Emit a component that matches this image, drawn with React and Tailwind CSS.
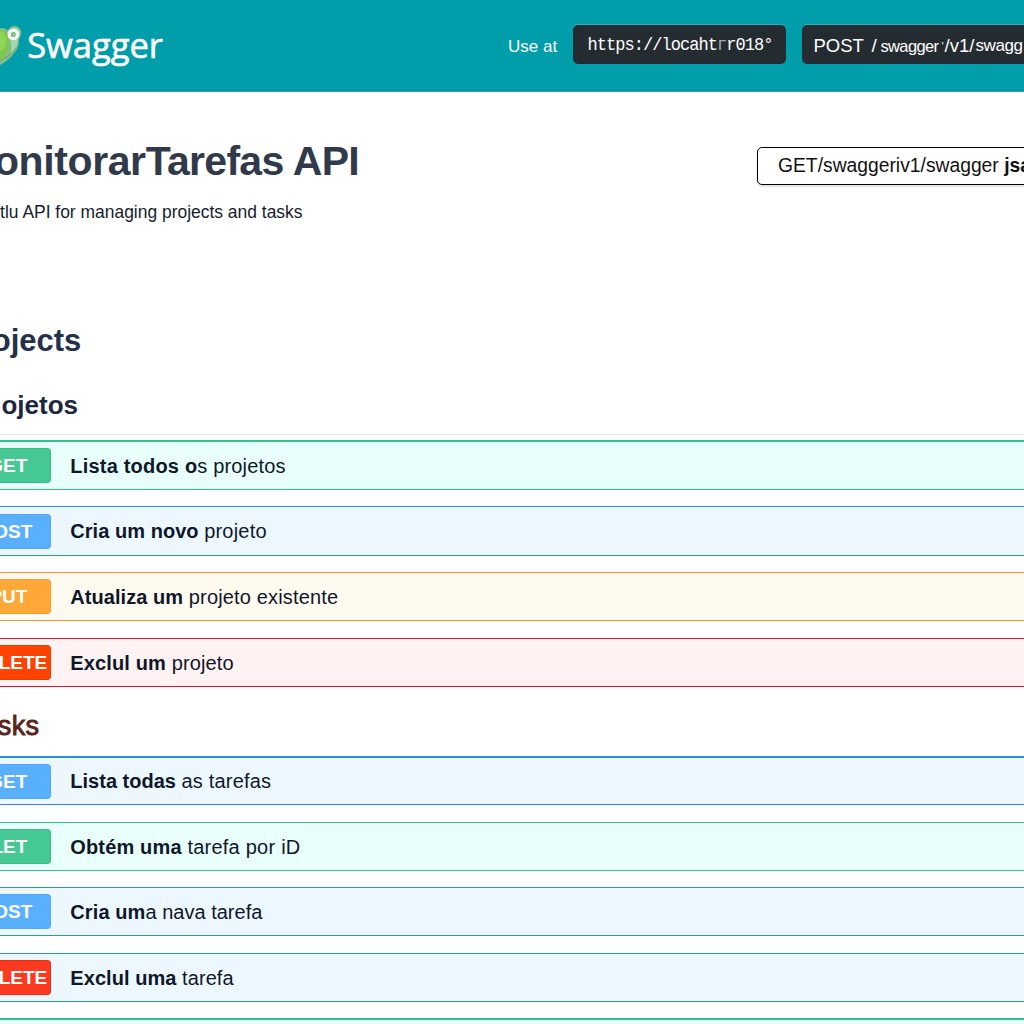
const METHODS = {
  green: "bg-[#45c894] border-[#37bd88]",
  blue: "bg-[#59b0ff] border-[#4fa8fb]",
  orange: "bg-[#ffa737] border-[#fb9c2a]",
  red: "bg-[#ff4303] border-[#f23a00]",
  crimson: "bg-[#fd3a20] border-[#ee2c14]",
};

const ROWS = {
  green: "bg-[#e8fffc] border-[#2fc489]",
  blue: "bg-[#edf7ff] border-[#2a8df0]",
  orange: "bg-[#fffaf0] border-[#f5992b]",
  red: "bg-[#fff2f2] border-[#dc1d1d]",
};

function Endpoint({ row, tone, method, end, bold, boldGap, rest, restGap, size = "h-[49px] mb-[17px]", borders = "border-y" }) {
  return (
    <div className={`flex shrink-0 items-center ${size} ${borders} ${ROWS[row]}`}>
      <div className={`flex h-[35px] w-[51px] shrink-0 items-center overflow-hidden rounded-r-[4px] border border-l-0 ${METHODS[tone]}`}>
        <div className={`flex shrink-0 justify-end whitespace-nowrap text-[19px] font-bold leading-none text-white ${end}`}>
          {method}
        </div>
      </div>
      <div className="ml-[19.300px] whitespace-pre text-[20px] leading-none text-[#0f172a]">
        <b className={boldGap}>{bold}</b>
        <span className={restGap}>{rest}</span>
      </div>
    </div>
  );
}

function Frog() {
  return (
    <svg className="h-[44px] w-[23px] shrink-0" viewBox="0 0 23 44">
      <path d="M0 5.500 C3 4.500 6 5.500 8 7.500 C9 4 13 2 17 3.500 C22 6 22.500 11 19 16 C19 22 18 26 14 30 C10 36 4 40 0 42Z" fill="#86bd83" />
      <path d="M7 10 C9 5 13 4 17 5 C21 7.500 21 12 17.500 16 C18 22 16 27 10 31 C13 24 11 16 7 10Z" fill="#a6d8b3" />
      <path d="M0 7.500 C6 7 9 12 9 18 C9 25 6 32 0 36Z" fill="#7ccb48" />
      <path d="M0 8 C5 9 6 13 6 18 C6 23 3 27 0 29Z" fill="#8ed656" />
      <path d="M0 38 C6 35 12 31 16.500 24" fill="none" stroke="#6a9f62" strokeWidth="0.900" />
      <circle cx="13.300" cy="11.500" r="5.700" fill="#fff" />
      <circle cx="13.300" cy="11.500" r="2.500" fill="#69b977" />
      <circle cx="13.600" cy="11.500" r="0.900" fill="#b7dfb0" />
    </svg>
  );
}

export default function App() {
  return (
    <div className="flex h-[1024px] w-[1024px] flex-col overflow-hidden bg-white font-['Liberation_Sans',Arial,sans-serif]">
      <header className="flex h-[92px] shrink-0 items-start overflow-hidden border-b border-[#2fa9b5] bg-[#009dab] text-white shadow-[inset_0_-1px_0_#078c9a]">
        <div className="flex w-[508px] shrink-0 items-start pt-[23px]">
          <Frog />
          <div className="-mt-[2px] ml-[4.200px] font-['Open_Sans',sans-serif] text-[34.500px] font-medium leading-[47px] [-webkit-text-stroke:0.6px_white]">Swagger</div>
        </div>
        <div className="mt-[36px] w-[65px] shrink-0 text-[17px] leading-[22px]">Use at</div>
        <div className="mt-[25px] flex h-[39px] w-[213px] shrink-0 items-center rounded-[5px] bg-[#242c31] pl-[14.500px] font-['Liberation_Mono',monospace] text-[17px] leading-[39px] tracking-[-0.95px] shadow-[0_-1px_0_#25b3bf]">
          <div className="scale-y-[1.13]">
            <span>https://locaht</span>
            <span className="opacity-60">г</span>
            <span>r018°</span>
          </div>
        </div>
        <div className="ml-[16px] mt-[25px] flex h-[39px] w-[300px] shrink-0 items-center whitespace-nowrap rounded-[5px] bg-[#242c31] pl-[11.500px] pt-[3px] shadow-[0_-1px_0_#25b3bf]">
          <span className="w-[58px] text-[18.500px]">POST</span>
          <span className="w-[9px] text-[19px]">/</span>
          <span className="w-[61px] text-[16.500px] tracking-[-0.65px]">swagger</span>
          <span className="w-[3px] text-[11px]">'</span>
          <span className="w-[31px] text-[18.500px]">/v1/</span>
          <span className="text-[17px] tracking-[-0.4px]">swagg</span>
        </div>
      </header>

      <section className="flex h-[223px] shrink-0 items-start justify-between">
        <div className="flex w-[400px] flex-col overflow-hidden">
          <h1 className="flex w-[359px] justify-end whitespace-nowrap pt-[45px] text-[41px] font-bold leading-[48px] text-[#303a4b]">
            <span className="tracking-[-0.4px]">Monitorar</span>
            <span className="tracking-[-0.7px]">Tarefas API</span>
          </h1>
          <p className="flex w-[302.500px] justify-end whitespace-nowrap pt-[17px] text-[17.450px] leading-[20px] text-[#141c2e]">
            tlu API for managing projects and tasks
          </p>
        </div>
        <div className="mr-[-80px] mt-[55px] flex h-[38px] w-[347px] shrink-0 items-center whitespace-pre rounded-[5px] border-[1.500px] border-black bg-white pl-[20px] text-[19.300px] text-[#111] shadow-[0_2px_2px_#e2e2e2]">
          GET/swaggeriv1/swagger <b>jsa</b>
        </div>
      </section>

      <h2 className="flex w-[81.300px] shrink-0 justify-end pt-[8px] text-[31px] font-bold leading-[36px] text-[#24304a]">Projects</h2>
      <h3 className="flex h-[75px] w-[78px] shrink-0 justify-end pt-[31px] text-[26px] font-bold leading-[30px] text-[#1c2740]">
        ojetos
      </h3>
      <div className="mb-[5px] h-px shrink-0 bg-[#e3e5e6]" />

      <Endpoint row="green" tone="green" method="GET" end="w-[27.4px]" bold="Lista todos o" boldGap="tracking-[0.2px]" rest="s projetos" restGap="tracking-[0.15px]" size="h-[50px] mb-[16px]" borders="border-t-2 border-b" />
      <Endpoint row="blue" tone="blue" method="POST" end="w-[32.4px]" bold="Cria um novo " boldGap="tracking-[0.04px]" rest="projeto" restGap="tracking-[0.2px]" size="h-[50px] mb-[16px]" />
      <Endpoint row="orange" tone="orange" method="PUT" end="w-[27.4px]" bold="Atualiza um " boldGap="tracking-[0.06px]" rest="projeto existente" restGap="tracking-[0.16px]" />
      <Endpoint row="red" tone="red" method="DELETE" end="w-[47.2px]" bold="Exclul um " boldGap="tracking-[0.14px]" rest="projeto" restGap="tracking-[0.12px]" size="h-[49px]" />

      <h2 className="flex h-[69px] w-[39.500px] shrink-0 justify-end pt-[24px] text-[27px] leading-[30px] tracking-[0.4px] text-[#58241b] [-webkit-text-stroke:0.9px_#58241b]">
        sks
      </h2>

      <Endpoint row="blue" tone="blue" method="GET" end="w-[27.4px]" bold="Lista todas " boldGap="tracking-[0.01px]" rest="as tarefas" restGap="tracking-[0.18px]" borders="border-t-2 border-b" />
      <Endpoint row="green" tone="green" method="LET" end="w-[27.4px]" bold="Obtém uma " boldGap="tracking-[0.15px]" rest="tarefa por iD" restGap="tracking-[0.24px]" size="h-[49px] mb-[16px]" />
      <Endpoint row="blue" tone="blue" method="POST" end="w-[32.4px]" bold="Cria um" boldGap="tracking-[0.1px]" rest="a nava tarefa" restGap="tracking-[0.01px]" size="h-[49px] mb-[17px]" />
      <Endpoint row="blue" tone="crimson" method="DELETE" end="w-[47.2px]" bold="Exclul uma " boldGap="tracking-[0.06px]" rest="tarefa" restGap="tracking-[0.06px]" size="h-[49px] mb-[16px]" />
      <div className="h-[6px] shrink-0 border-t-2 border-[#2fc489] bg-[#e8fffc]" />
    </div>
  );
}
